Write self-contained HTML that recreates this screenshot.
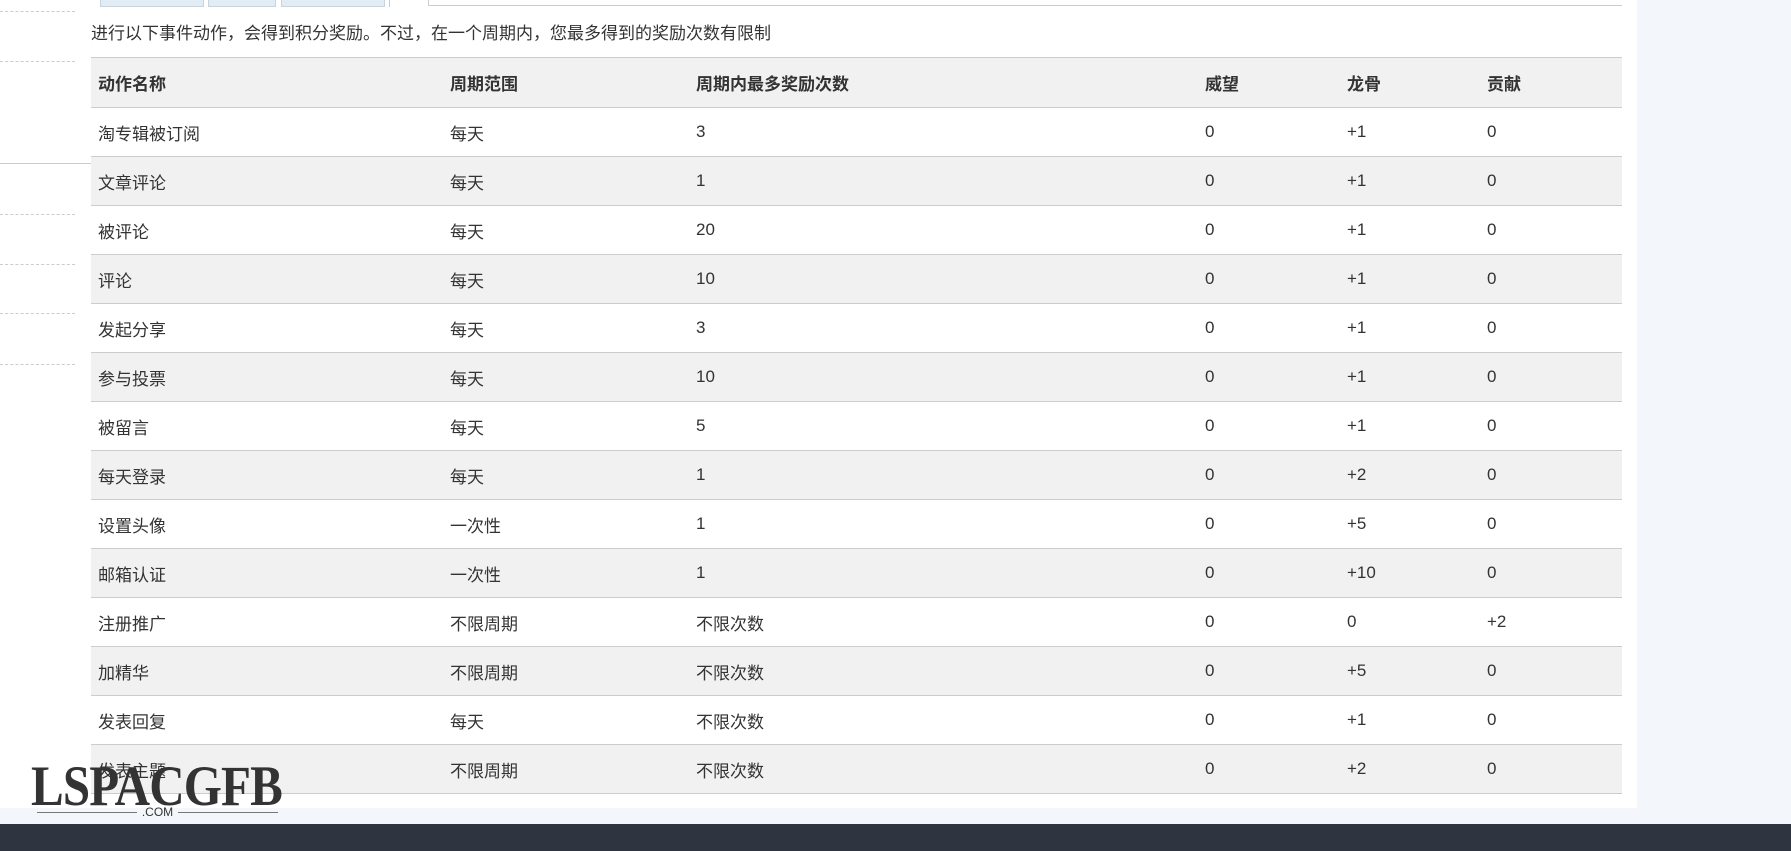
<!DOCTYPE html>
<html><head><meta charset="utf-8"><style>
*{margin:0;padding:0;box-sizing:border-box}
body{width:1791px;height:851px;overflow:hidden;background:#f3f6fa;font-family:"Liberation Sans","Noto Sans CJK SC",sans-serif;color:#333;position:relative}
.panel{position:absolute;left:0;top:0;width:1637px;height:808px;background:#fff}
.footer{position:absolute;left:0;top:824px;width:1791px;height:27px;background:#2f3540}
.dash{position:absolute;left:0;width:75px;border-top:1px dashed #ccc}
.tab{position:absolute;top:0;height:7px;background:#e1ecf5;border:1px solid #c9d3dc;border-top:none}
.intro{position:absolute;left:91px;top:19px;font-size:17px;color:#333}
table{position:absolute;left:91px;top:57px;width:1531px;border-collapse:collapse;font-size:17px}
td{height:49px;border-bottom:1px solid #ccc;padding:0 0 0 7px;vertical-align:middle;white-space:nowrap}
tr.h td{font-weight:bold;border-top:1px solid #ccc;background:#f1f1f1;height:50px}
tr:nth-child(odd) td{background:#f1f1f1}
.logo{position:absolute;left:31px;top:756px;font-family:"Liberation Serif",serif;font-weight:bold;font-size:57px;color:#333;transform:scaleX(0.86);transform-origin:left top;letter-spacing:-1px;line-height:1.1}
.com{position:absolute;left:37px;top:805px;width:241px;font-size:12px;line-height:14px;color:#333;text-align:center}
.com:before,.com:after{content:"";position:absolute;top:7px;width:100px;border-top:1px solid #777}
.com:before{left:0}.com:after{right:0}
</style></head><body>
<div class="panel"></div>
<div class="footer"></div>
<div class="dash" style="top:11px"></div>
<div class="dash" style="top:61px"></div>
<div style="position:absolute;left:0;top:163px;width:91px;border-top:1px solid #ccc"></div>
<div class="dash" style="top:214px"></div>
<div class="dash" style="top:264px"></div>
<div class="dash" style="top:313px"></div>
<div class="dash" style="top:364px"></div>
<div class="tab" style="left:100px;width:104px"></div>
<div class="tab" style="left:208px;width:68px"></div>
<div class="tab" style="left:281px;width:104px"></div>
<div style="position:absolute;left:386px;top:0;width:4px;height:7px;border-right:1px solid #ccc"></div>
<div style="position:absolute;left:428px;top:0;width:1194px;height:6px;border-left:1px solid #ccc;border-bottom:1px solid #ccc"></div>
<div class="intro">进行以下事件动作，会得到积分奖励。不过，在一个周期内，您最多得到的奖励次数有限制</div>
<table>
<colgroup><col style="width:352px"><col style="width:246px"><col style="width:509px"><col style="width:142px"><col style="width:140px"><col></colgroup>
<tr class="h"><td>动作名称</td><td>周期范围</td><td>周期内最多奖励次数</td><td>威望</td><td>龙骨</td><td>贡献</td></tr>
<tr><td>淘专辑被订阅</td><td>每天</td><td>3</td><td>0</td><td>+1</td><td>0</td></tr>
<tr><td>文章评论</td><td>每天</td><td>1</td><td>0</td><td>+1</td><td>0</td></tr>
<tr><td>被评论</td><td>每天</td><td>20</td><td>0</td><td>+1</td><td>0</td></tr>
<tr><td>评论</td><td>每天</td><td>10</td><td>0</td><td>+1</td><td>0</td></tr>
<tr><td>发起分享</td><td>每天</td><td>3</td><td>0</td><td>+1</td><td>0</td></tr>
<tr><td>参与投票</td><td>每天</td><td>10</td><td>0</td><td>+1</td><td>0</td></tr>
<tr><td>被留言</td><td>每天</td><td>5</td><td>0</td><td>+1</td><td>0</td></tr>
<tr><td>每天登录</td><td>每天</td><td>1</td><td>0</td><td>+2</td><td>0</td></tr>
<tr><td>设置头像</td><td>一次性</td><td>1</td><td>0</td><td>+5</td><td>0</td></tr>
<tr><td>邮箱认证</td><td>一次性</td><td>1</td><td>0</td><td>+10</td><td>0</td></tr>
<tr><td>注册推广</td><td>不限周期</td><td>不限次数</td><td>0</td><td>0</td><td>+2</td></tr>
<tr><td>加精华</td><td>不限周期</td><td>不限次数</td><td>0</td><td>+5</td><td>0</td></tr>
<tr><td>发表回复</td><td>每天</td><td>不限次数</td><td>0</td><td>+1</td><td>0</td></tr>
<tr><td>发表主题</td><td>不限周期</td><td>不限次数</td><td>0</td><td>+2</td><td>0</td></tr>
</table>
<div class="logo">LSPACGFB</div>
<div class="com">.COM</div>
</body></html>
